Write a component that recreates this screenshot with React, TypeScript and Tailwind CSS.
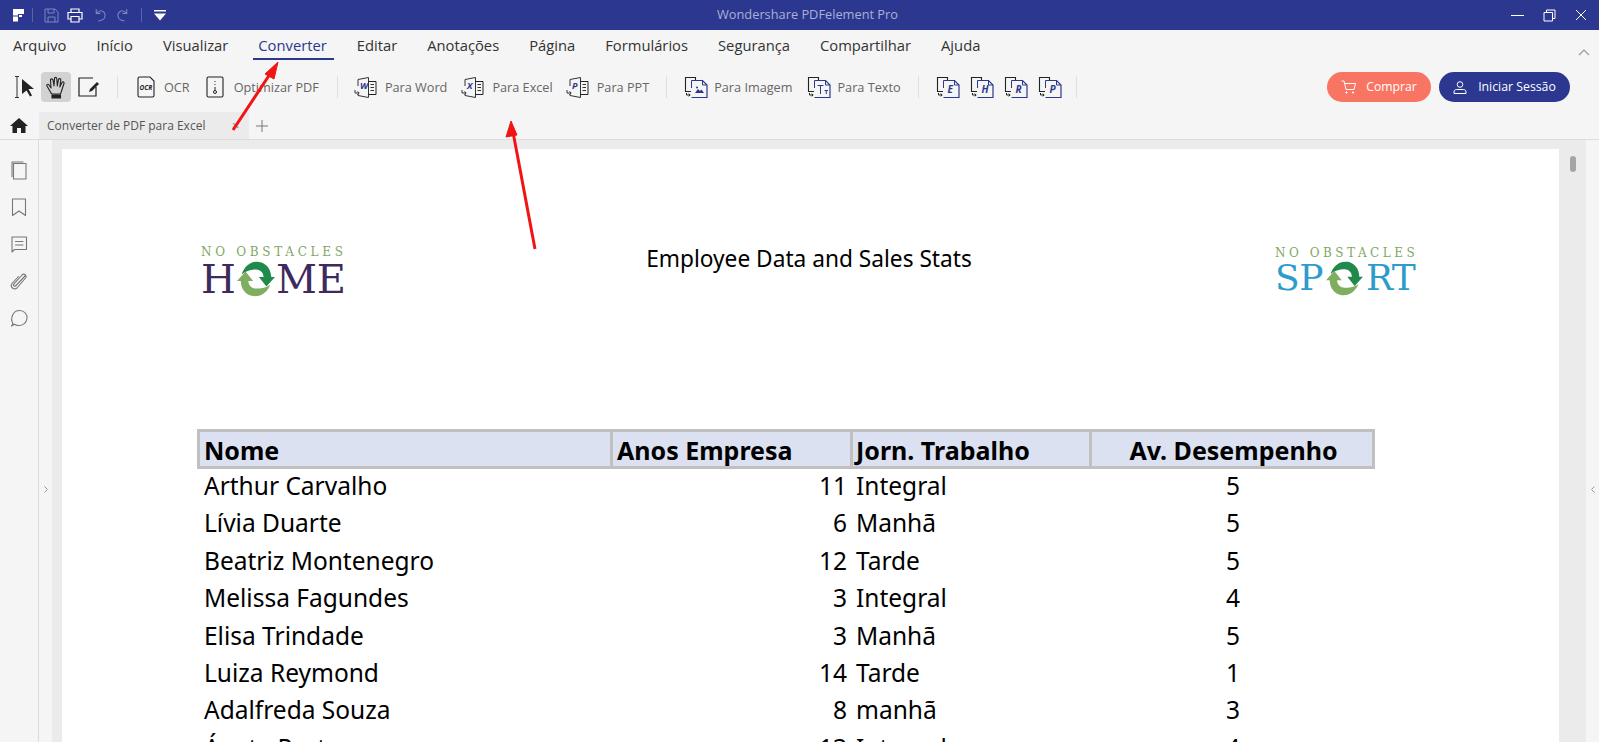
import type { ReactNode } from "react";

const NAVY = "#2c388f";

const menus = ["Arquivo", "Início", "Visualizar", "Converter", "Editar", "Anotações", "Página", "Formulários", "Segurança", "Compartilhar", "Ajuda"];

const rows = [
  ["Arthur Carvalho", "11", "Integral", "5"],
  ["Lívia Duarte", "6", "Manhã", "5"],
  ["Beatriz Montenegro", "12", "Tarde", "5"],
  ["Melissa Fagundes", "3", "Integral", "4"],
  ["Elisa Trindade", "3", "Manhã", "5"],
  ["Luiza Reymond", "14", "Tarde", "1"],
  ["Adalfreda Souza", "8", "manhã", "3"],
  ["Ágata Porto", "13", "Integral", "4"],
];

function Sep({ className = "" }: { className?: string }) {
  return <div className={`w-px h-[22px] shrink-0 bg-[#e0e0e0] ${className}`} />;
}

// page with a letter on the left, text lines on the right
function SplitDoc({ letter }: { letter: string }) {
  return (
    <svg width="23" height="23" viewBox="0 0 23 23" fill="none" className="shrink-0">
      <path d="M4 10V3.5L14.5 1.5V21.5L4 19.5V18" stroke="#333" strokeWidth="1" />
      <path d="M14.5 5.5H22V18.5H14.5" stroke="#222" strokeWidth="1" />
      <path d="M16.5 8.5H20M16.5 11.5H20M16.5 14.5H20" stroke="#333" strokeWidth="1" />
      <text x="6" y="13" fontSize="9" fontWeight="700" fontStyle="italic" fill={NAVY} fontFamily="'Open Sans', sans-serif">{letter}</text>
      <path d="M1 14V17H5M3.5 15.5L5.2 17L3.5 18.5" stroke="#333" strokeWidth="1" />
    </svg>
  );
}

// black back page, navy front page with a folded corner
function StackDoc({ children }: { children: ReactNode }) {
  return (
    <svg width="24" height="23" viewBox="0 0 24 23" fill="none" className="shrink-0">
      <path d="M7 15.5H1.5V1.5H11.5V4" stroke="#222" strokeWidth="1.1" />
      <path d="M7.5 4.5H18.5L23 9V21.5H7.5" stroke={NAVY} strokeWidth="1.2" />
      <path d="M7.5 4.5V12M18.5 4.5V9H23" stroke={NAVY} strokeWidth="1" />
      <path d="M2.5 17V19H6M4.7 17.7L6.2 19L4.7 20.3" stroke="#222" strokeWidth="1" />
      {children}
    </svg>
  );
}

function Letter({ c }: { c: string }) {
  return <text x="11.5" y="17" fontSize="10" fontWeight="700" fontStyle="italic" fill={NAVY} fontFamily="'Open Sans', sans-serif">{c}</text>;
}

function Tool({ icon, label, className = "", gap = "ml-2" }: { icon: ReactNode; label: string; className?: string; gap?: string }) {
  return (
    <div className={`flex items-center shrink-0 ${className}`}>
      {icon}
      <span className={`text-[12.7px] text-[#666] mt-[1px] whitespace-nowrap ${gap}`}>{label}</span>
    </div>
  );
}

function Recycle({ size, className = "" }: { size: number; className?: string }) {
  return (
    <svg width={size} height={size} viewBox="0 0 40 40" fill="none" className={`shrink-0 ${className}`}>
      <path d="M5 15C8 6 15 1 23 2C31 3 36 10 36 18H40L31 28L23 18H28C28 13 24 10 20 10C15 10 11 11 5 15Z" fill="#1f8a4c" />
      <path d="M35 26C32 34 25 39 17 38C9 37 4 30 4 22H0L9 12L17 22H12C12 27 16 30 20 30C25 30 29 30 35 26Z" fill="#7fae60" />
    </svg>
  );
}

function SideIcon({ children }: { children: ReactNode }) {
  return (
    <svg width="20" height="20" viewBox="0 0 20 20" fill="none" stroke="#777" strokeWidth="1.1" strokeLinejoin="round" strokeLinecap="round">
      {children}
    </svg>
  );
}

export default function App() {
  return (
    <div className="relative h-screen w-full overflow-hidden bg-[#f5f5f5] flex flex-col font-['Open_Sans',sans-serif]">
      {/* Title bar */}
      <div className="h-[30px] shrink-0 flex items-center" style={{ backgroundColor: NAVY }}>
        <svg width="12" height="13" viewBox="0 0 12 13" fill="white" className="ml-[13px] shrink-0">
          <path d="M0 0H11V5H5V6.5H0ZM0 7.5H5V12.5H0ZM6 6H9V8H6Z" />
        </svg>
        <div className="w-px h-[14px] bg-[#5a64a8] ml-[7px]" />
        <svg width="15" height="15" viewBox="0 0 15 15" fill="none" stroke="#7c84bd" className="ml-[11px] shrink-0">
          <path d="M1 1H11L14 4V14H1ZM4 1V5H10V1M4 14V9H11V14" />
        </svg>
        <svg width="16" height="15" viewBox="0 0 16 15" fill="none" stroke="white" strokeWidth="1.2" className="ml-[8px] shrink-0">
          <path d="M4 4V1H12V4M4 11H1V4.5H15V11H12M4 8.5H12V14H4Z" />
        </svg>
        <svg width="14" height="14" viewBox="0 0 13 13" fill="none" stroke="#7c84bd" className="ml-[10px] shrink-0">
          <path d="M3 1V5H7M3 5C5 3 7 2 9 3C12 4.500 12 9 9 11C8 11.500 7 12 5 12" />
        </svg>
        <svg width="14" height="14" viewBox="0 0 13 13" fill="none" stroke="#7c84bd" className="ml-[9px] shrink-0">
          <path d="M10 1V5H6M10 5C8 3 6 2 4 3C1 4.500 1 9 4 11C5 11.500 6 12 8 12" />
        </svg>
        <div className="w-px h-[14px] bg-[#5a64a8] ml-[11px]" />
        <svg width="12" height="11" viewBox="0 0 12 11" fill="white" className="ml-[12px] shrink-0">
          <path d="M0 0H12V1.500H0ZM0 3.500H12L6 10.500Z" />
        </svg>
        <span className="ml-[551px] text-[12.8px] text-[#aab0d6] whitespace-nowrap">Wondershare PDFelement Pro</span>
        <div className="ml-auto flex items-center pr-[12px]">
          <div className="w-[13px] h-px bg-white" />
          <svg width="13" height="13" viewBox="0 0 13 13" fill="none" stroke="white" className="ml-[19px]">
            <path d="M1 3.500H9.500V12H1ZM3.500 3V1H12V9.500H10" />
          </svg>
          <svg width="12" height="12" viewBox="0 0 12 12" fill="none" stroke="white" className="ml-[19px]">
            <path d="M1 1L11 11M11 1L1 11" />
          </svg>
        </div>
      </div>

      {/* Menu */}
      <div className="h-[30px] shrink-0 flex items-center pl-[13px] gap-[30px] relative">
        {menus.map((m) => (
          <div key={m} className={`relative text-[14.75px] whitespace-nowrap ${m === "Converter" ? "text-[#2c388f]" : "text-[#333]"}`}>
            {m}
            {m === "Converter" && <div className="absolute left-[-5px] right-[-7px] bottom-[-4px] h-[2px] bg-[#2c388f]" />}
          </div>
        ))}
        <svg width="12" height="7" viewBox="0 0 12 7" fill="none" stroke="#999" strokeWidth="1.2" className="absolute right-[9px] top-[19px]">
          <path d="M1 6L6 1L11 6" />
        </svg>
      </div>

      {/* Toolbar */}
      <div className="h-[52px] shrink-0 flex items-center pl-[15px] pt-[2px]">
        <svg width="20" height="22" viewBox="0 0 20 22" fill="none" className="shrink-0">
          <path d="M0 .5H4M0 21.500H4M2 .5V21.500" stroke="#333" />
          <path d="M7 3L19 13H13.500L17 19.500L15 20.500L11.500 14.500L7 18Z" fill="#222" />
        </svg>
        <div className="w-[30px] h-[30px] ml-[6px] bg-[#d2d2d2] rounded-sm flex items-center justify-center shrink-0">
          <svg width="22" height="23" viewBox="0 0 22 23" fill="none" stroke="#222" strokeWidth="1.1" strokeLinecap="round" strokeLinejoin="round">
            <path d="M6 17L2 10C1 8.500 3 7.500 4 9L6 12L5.500 4C5.500 2.500 7.500 2.500 8 4L9 10L9.500 2.500C9.500 1 11.500 1 11.800 2.500L12.300 10L13.500 3.500C14 2 16 2.500 15.800 4L14.800 11L17 6.500C17.800 5.200 19.500 6 19 7.500L16.500 15L15.500 18H7Z" />
            <path d="M7 19H15.500V22H7Z" fill="#222" />
          </svg>
        </div>
        <svg width="22" height="20" viewBox="0 0 22 20" fill="none" className="ml-[7px] shrink-0">
          <path d="M15 1H1V19H18V10" stroke="#222" strokeWidth="1.2" />
          <path d="M11 15L12 12L19 5L21 7L14 14Z" fill="#222" />
        </svg>
        <Sep className="ml-[17px]" />
        <svg width="18" height="22" viewBox="0 0 18 22" fill="none" className="ml-[19px] shrink-0">
          <path d="M1 2.500C1 1.500 1.500 1 2.500 1H13L17 5V19.500C17 20.500 16.500 21 15.500 21H2.500C1.500 21 1 20.500 1 19.500Z" stroke="#222" strokeWidth="1.1" />
          <text x="2.500" y="14" fontSize="6.500" fontWeight="700" fontStyle="italic" fill="#222" fontFamily="'Open Sans', sans-serif">OCR</text>
        </svg>
        <span className="ml-[9px] mt-[1px] text-[12.7px] text-[#666]">OCR</span>
        <svg width="18" height="22" viewBox="0 0 18 22" fill="none" stroke="#222" className="ml-[16px] shrink-0">
          <path d="M2.500 1H15.500C16.500 1 17 1.500 17 2.500V19.500C17 20.500 16.500 21 15.500 21H2.500C1.500 21 1 20.500 1 19.500V2.500C1 1.500 1.500 1 2.500 1Z" strokeWidth="1.100" />
          <path d="M9 5V6M9 8V9M9 11V14" />
          <circle cx="9" cy="16" r="1.500" />
        </svg>
        <span className="ml-[10px] mt-[1px] text-[12.7px] text-[#666] whitespace-nowrap">Optimizar PDF</span>
        <Sep className="ml-[18px]" />
        <Tool className="ml-[16px]" icon={<SplitDoc letter="W" />} label="Para Word" />
        <Tool className="ml-[14px]" icon={<SplitDoc letter="X" />} label="Para Excel" />
        <Tool className="ml-[13px]" icon={<SplitDoc letter="P" />} label="Para PPT" />
        <Sep className="ml-[17px]" />
        <Tool
          className="ml-[17px]"
          gap="ml-[6px]"
          icon={
            <StackDoc>
              <path d="M11 17L14 13L16 15L17.500 13.500L20 17Z" fill={NAVY} />
              <circle cx="13" cy="11.500" r="1" fill={NAVY} />
            </StackDoc>
          }
          label="Para Imagem"
        />
        <Tool
          className="ml-[15px]"
          gap="ml-[6px]"
          icon={
            <StackDoc>
              <path d="M10.500 9.500H16.500M13.500 9.500V18M17.500 14.500H21M19.250 14.500V18" stroke={NAVY} />
            </StackDoc>
          }
          label="Para Texto"
        />
        <Sep className="ml-[17px]" />
        <div className="ml-[17px] flex gap-[10px] shrink-0">
          {["E", "H", "R", "P"].map((c) => (
            <StackDoc key={c}>
              <Letter c={c} />
            </StackDoc>
          ))}
        </div>
        <Sep className="ml-[14px]" />
        <div className="ml-auto flex items-center pr-[29px] gap-[8px]">
          <div className="w-[104px] h-[30px] rounded-full bg-[#f97563] text-white text-[12.2px] flex items-center justify-center gap-[10px]">
            <svg width="15" height="14" viewBox="0 0 15 14" fill="none" stroke="white">
              <path d="M.5 1H3L5 9.500H13L14.500 3.500H3.500" />
              <circle cx="5.500" cy="12.500" r=".7" fill="white" />
              <circle cx="12" cy="12.500" r=".7" fill="white" />
            </svg>
            Comprar
          </div>
          <div className="w-[131px] h-[30px] rounded-full bg-[#2c388f] text-white text-[12.3px] flex items-center justify-center gap-[11px]">
            <svg width="14" height="13" viewBox="0 0 14 13" fill="none" stroke="white">
              <circle cx="7" cy="3.500" r="2.800" />
              <path d="M1 12.500V11C1 9.500 2 8.500 3.500 8.500H10.500C12 8.500 13 9.500 13 11V12.500Z" />
            </svg>
            Iniciar Sessão
          </div>
        </div>
      </div>

      {/* Tabs */}
      <div className="h-[28px] shrink-0 flex items-stretch border-b border-[#dcdcdc]">
        <div className="w-[39px] flex items-center justify-center">
          <svg width="18" height="15" viewBox="0 0 18 15" fill="#222" className="-ml-[1px]">
            <path d="M9 0L18 8H15.500V15H11V10H7V15H2.500V8H0Z" />
          </svg>
        </div>
        <div className="w-[210px] bg-[#ebebeb] flex items-center pl-[8px] text-[12px] text-[#555] relative">
          Converter de PDF para Excel
          <span className="absolute left-[193px] top-[5px] text-[13px] text-[#777] leading-[16px]">×</span>
        </div>
        <svg width="12" height="12" viewBox="0 0 12 12" stroke="#777" className="ml-[7px] self-center">
          <path d="M6 0V12M0 6H12" />
        </svg>
      </div>

      {/* Body */}
      <div className="flex-1 min-h-0 flex">
        <div className="w-[39px] shrink-0 border-r border-[#dcdcdc] flex flex-col items-center pt-[20px] gap-[17px]">
          <SideIcon>
            <path d="M3 16.500V2H14" />
            <path d="M4.500 3.500H17V19H4.500Z" />
          </SideIcon>
          <SideIcon>
            <path d="M3.500 2H16.500V18.500L10 14L3.500 18.500Z" />
          </SideIcon>
          <SideIcon>
            <path d="M3 3H17.500V15.500H5.500L3 18Z" />
            <path d="M6.500 7.500H14M6.500 11H14" />
          </SideIcon>
          <SideIcon>
            <path d="M16 5L7 14.500C5.500 16 3.500 14.500 5 12.800L13 4C15 2 18.500 4.500 16.500 7L8 17C5 19.500 0.500 16 3 12.500L9.500 5.500" />
          </SideIcon>
          <SideIcon>
            <path d="M4 15.500C1 11 3.500 2.500 10.500 2.500C15.500 2.500 18.500 6.500 18 10.500C17.500 15 13.500 18 9 17.500C7.500 17.300 6.500 16.800 5.500 16.200L2.500 18Z" />
          </SideIcon>
        </div>
        <div className="w-[13px] shrink-0 flex items-center justify-center pt-[96px]">
          <svg width="4" height="7" viewBox="0 0 4 7" fill="none" stroke="#999">
            <path d="M.5 .5L3.500 3.500L.5 6.500" />
          </svg>
        </div>

        <div className="flex-1 min-w-0 bg-[#ebebeb] pl-[10px] pt-[9px] flex">
          <div className="w-[1497px] shrink-0 bg-white overflow-hidden">
            {/* Report head */}
            <div className="flex items-start pl-[140px] pt-[97px] h-[280px]">
              <div className="w-[144px] shrink-0 -ml-[1px]">
                <div className="text-[12px] leading-[12px] tracking-[3.7px] text-[#7fa862] whitespace-nowrap font-['DejaVu_Serif',serif]">NO OBSTACLES</div>
                <div className="flex items-center h-[32px] mt-[5px] text-[40px] leading-[32px] text-[#3f2a5e] font-['DejaVu_Serif',serif]">
                  <span>H</span>
                  <Recycle size={38} className="mx-[1px]" />
                  <span>ME</span>
                </div>
              </div>
              <div className="ml-[301px] w-[326px] shrink-0 -mt-[2px] text-center text-[22.7px] leading-[30px] text-black whitespace-nowrap font-['Noto_Sans',sans-serif]">
                Employee Data and Sales Stats
              </div>
              <div className="ml-[303px] w-[142px] shrink-0 mt-[1px]">
                <div className="text-[12px] leading-[12px] tracking-[3.5px] text-[#7fa862] whitespace-nowrap font-['DejaVu_Serif',serif]">NO OBSTACLES</div>
                <div className="flex items-center h-[32px] mt-[3px] text-[36px] leading-[32px] tracking-[-0.5px] text-[#2e9ccb] font-['DejaVu_Serif',serif]">
                  <span>SP</span>
                  <Recycle size={37} className="mx-[3px]" />
                  <span>RT</span>
                </div>
              </div>
            </div>

            {/* Table */}
            <div className="ml-[135px] w-[1178px] text-black font-['Noto_Sans',sans-serif] text-[24.5px]">
              <div className="grid grid-cols-[413px_240px_239px_283px] h-[40px] text-[25px] font-bold leading-[36px] bg-[#dbe1f1] border-[3px] border-[#c0c0c0]">
                <div className="pl-[4px] border-r-[3px] border-[#c0c0c0]">Nome</div>
                <div className="pl-[4px] border-r-[3px] border-[#c0c0c0] whitespace-nowrap">Anos Empresa</div>
                <div className="pl-[3px] border-r-[3px] border-[#c0c0c0] whitespace-nowrap">Jorn. Trabalho</div>
                <div className="text-center whitespace-nowrap">Av. Desempenho</div>
              </div>
              {rows.map((r) => (
                <div key={r[0]} className="grid grid-cols-[415px_240px_239px_278px] h-[37.4px] leading-[33px] pl-[3px]">
                  <div className="pl-[4px]">{r[0]}</div>
                  <div className="text-right pr-[8px]">{r[1]}</div>
                  <div className="pl-[1px]">{r[2]}</div>
                  <div className="text-center">{r[3]}</div>
                </div>
              ))}
            </div>
          </div>
          <div className="flex-1 pl-[11px] pt-[7px]">
            <div className="w-[6px] h-[16px] rounded-sm bg-[#a5a5a5]" />
          </div>
        </div>
        <div className="w-[13px] shrink-0 flex items-center justify-center pt-[96px]">
          <svg width="4" height="7" viewBox="0 0 4 7" fill="none" stroke="#999">
            <path d="M3.500 .5L.5 3.500L3.500 6.500" />
          </svg>
        </div>
      </div>

      {/* Red annotation arrows drawn over the screenshot */}
      <svg className="absolute inset-0 pointer-events-none" width="1599" height="742" viewBox="0 0 1599 742" fill="none">
        <path d="M233 130L272 71" stroke="#f01414" strokeWidth="3" />
        <path d="M278 62L265 74L274 79Z" fill="#f01414" stroke="#f01414" />
        <path d="M535 249L513 132" stroke="#f01414" strokeWidth="3" />
        <path d="M511 121L506 137L517 135Z" fill="#f01414" stroke="#f01414" />
      </svg>
    </div>
  );
}
